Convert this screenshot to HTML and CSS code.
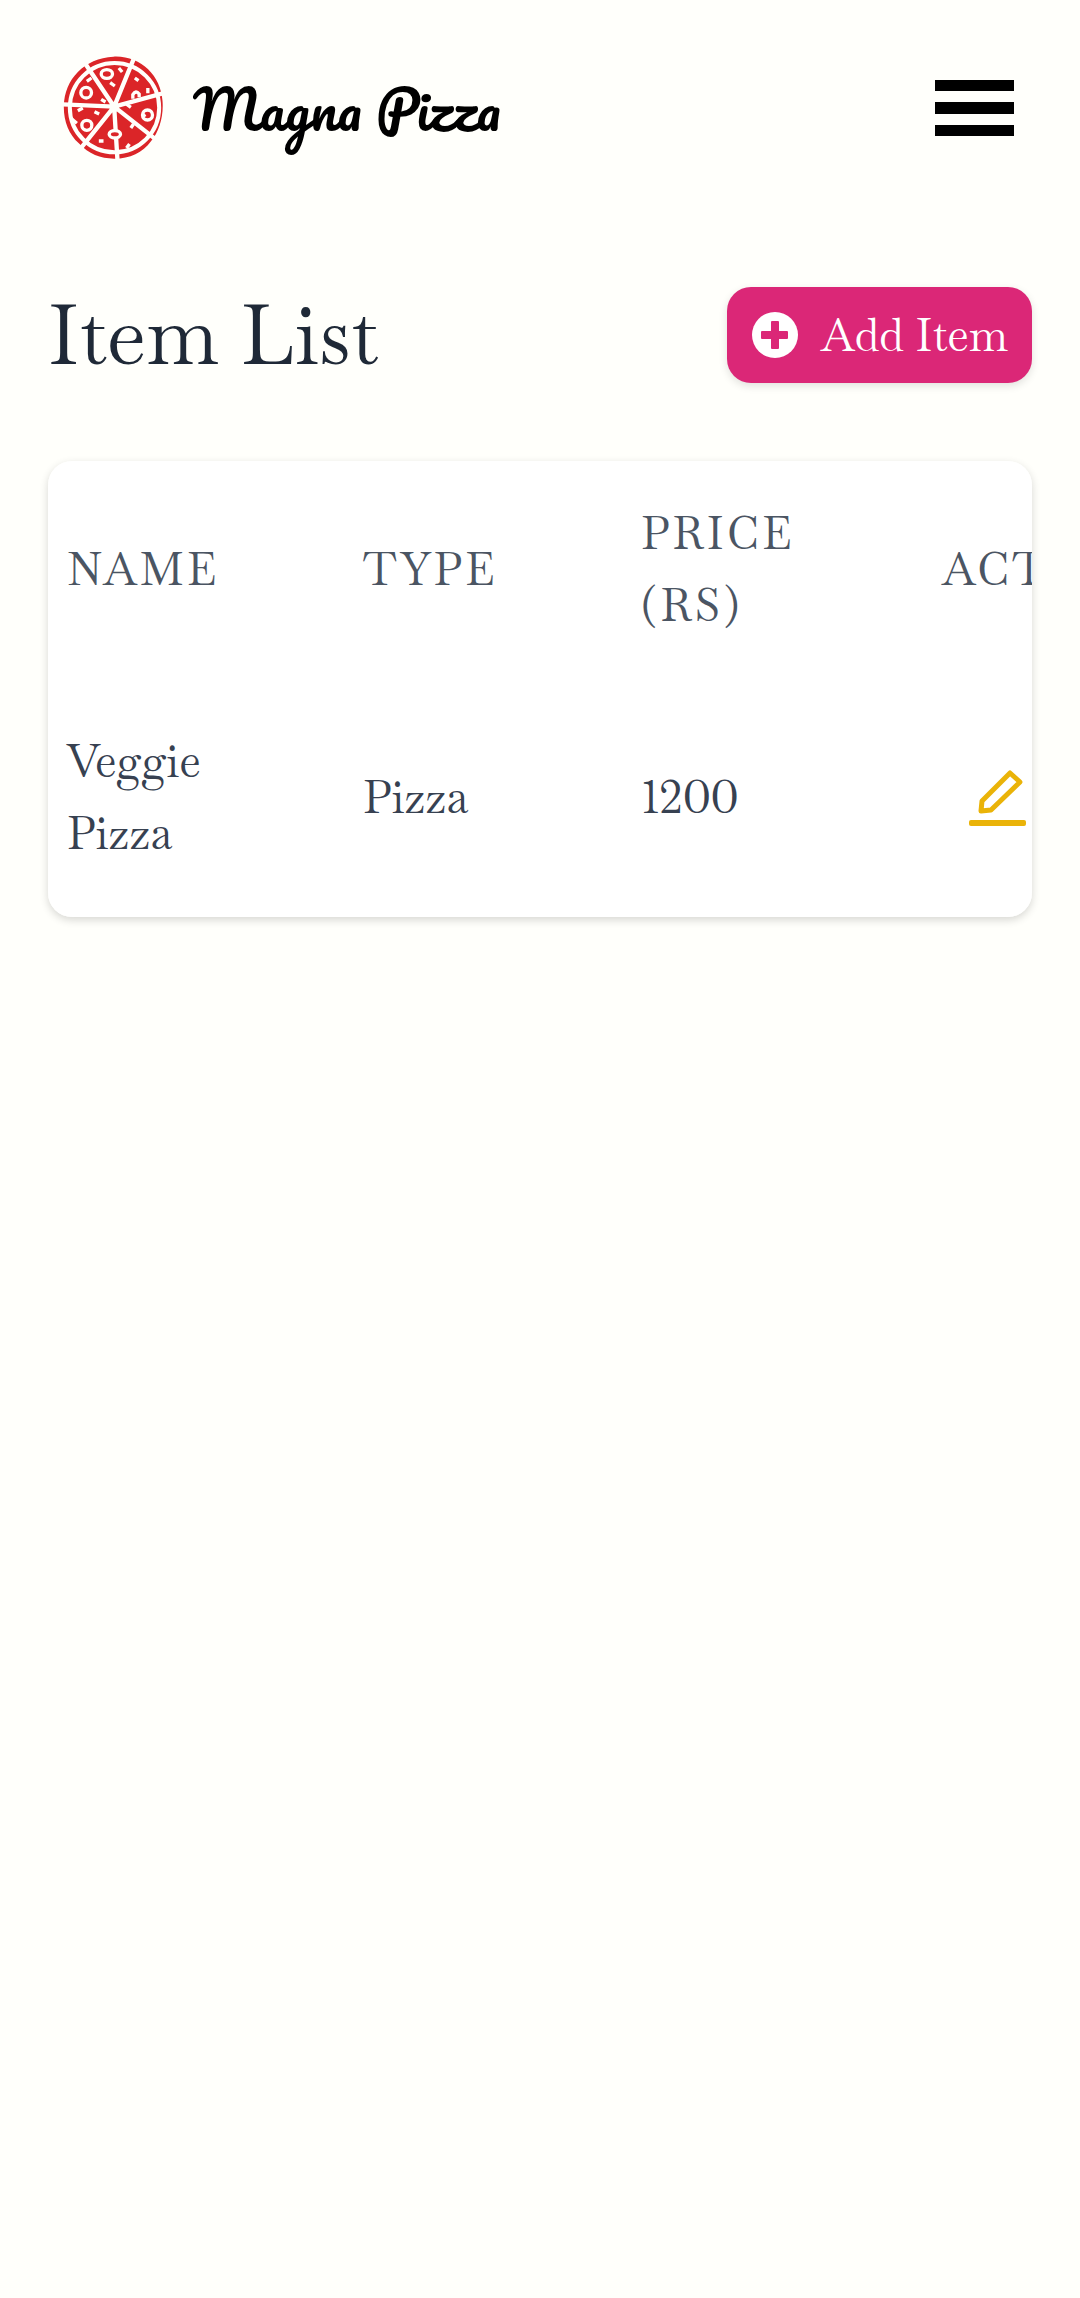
FILE: index.html
```html
<!DOCTYPE html>
<html lang="en">
<head>
  <meta charset="utf-8">
  <meta name="viewport" content="width=device-width, initial-scale=1">
  <title>Magna Pizza</title>
  <link rel="stylesheet" href="styles.css">
</head>
<body>
  <header class="site-header">
    <a class="brand" href="#">
      <svg class="brand-logo" viewBox="40 46 303 309" aria-hidden="true">
        <path fill="#db2528" d="M190 48C270 44 332 104 337 180C341 226 327 272 303 301C277 337 240 354 192 354C150 354 116 340 86 308C56 282 40 240 41 196C43 116 102 52 190 48Z"/>
        <g fill="none" stroke="#fffffb" stroke-width="12">
          <circle cx="193" cy="201" r="134"/>
          <path d="M192 198L250 56M192 198L348 155M192 198L314 294M192 198L202 360M192 198L94 320M192 198L34 191M192 198L106 70" stroke-width="13"/>
        </g>
        <circle cx="192" cy="200" r="14" fill="#fffffb"/>
        <g fill="#db2528" stroke="#fffffb" stroke-width="10">
          <ellipse cx="170" cy="100" rx="17" ry="13"/>
          <circle cx="108" cy="156" r="16"/>
          <circle cx="110" cy="254" r="15"/>
          <ellipse cx="194" cy="281" rx="17" ry="11"/>
          <circle cx="292" cy="223" r="15"/>
        </g>
        <g fill="none" stroke="#fffffb" stroke-width="10">
          <path d="M248 174V162Q257 147 267 160V170M206 82L216 94M180 126L194 136M254 112L265 120M293 142V158M110 122L124 112M153 176L166 184M83 210L98 202M133 213L147 220M64 234L80 248M146 301H160M242 262L250 250M229 322L238 310M228 190L242 200M276 228L286 222"/>
        </g>
      </svg>
      <span class="brand-name">Magna Pizza</span>
    </a>
    <button class="menu-button" type="button" aria-label="Open menu">
      <svg class="menu-icon" viewBox="0 0 79 58" aria-hidden="true">
        <path d="M0 1H79V12H0ZM0 23H79V35H0ZM0 46H79V57H0Z"/>
      </svg>
    </button>
  </header>

  <main class="content">
    <div class="title-row">
      <h1 class="title">Item List</h1>
      <button class="add-button" type="button">
        <svg class="add-icon" viewBox="0 0 48 48" aria-hidden="true">
          <circle cx="24" cy="24" r="23" fill="#fff"/>
          <path fill="#db2777" d="M21 10H27Q28 10 28 11V20H36Q37 20 37 21V27Q37 28 36 28H28V37Q28 38 27 38H21Q20 38 20 37V28H11Q10 28 10 27V21Q10 20 11 20H20V11Q20 10 21 10Z"/>
        </svg>
        Add Item
      </button>
    </div>

    <div class="card">
      <table class="items">
        <colgroup>
          <col class="col-name">
          <col class="col-type">
          <col class="col-price">
          <col class="col-actions">
        </colgroup>
        <thead>
          <tr>
            <th scope="col">Name</th>
            <th scope="col">Type</th>
            <th scope="col">Price (Rs)</th>
            <th scope="col">Actions</th>
          </tr>
        </thead>
        <tbody>
          <tr>
            <td>Veggie Pizza</td>
            <td>Pizza</td>
            <td>1200</td>
            <td>
              <button class="edit-button" type="button" aria-label="Edit Veggie Pizza">
                <svg class="edit-icon" viewBox="0 0 64 64" aria-hidden="true">
                  <path fill="none" stroke="currentColor" stroke-width="5" stroke-linejoin="round" d="M44 8L54 17L25 45L15 46L16 36Z"/>
                  <rect x="3" y="55" width="57" height="6" rx="2" fill="currentColor"/>
                </svg>
              </button>
            </td>
          </tr>
        </tbody>
      </table>
    </div>
  </main>
</body>
</html>
```
FILE: styles.css
```css
* {
  box-sizing: border-box;
}

body {
  margin: 0;
  min-height: 100vh;
  background: #fffffb;
  color: #1f2937;
  font-family: Baskervville, "Liberation Serif", serif;
  font-size: 45px;
  font-variant-numeric: lining-nums;
  line-height: 72px;
}

button {
  border: 0;
  padding: 0;
  background: none;
  font: inherit;
  cursor: pointer;
}

svg {
  display: block;
}

.site-header {
  display: flex;
  align-items: center;
  justify-content: space-between;
  padding: 56px 66px 54px 63px;
}

.brand {
  display: flex;
  align-items: center;
  gap: 28px;
  color: #000;
  text-decoration: none;
}

.brand-logo {
  width: 102px;
  height: 103px;
}

.brand-name {
  font-family: Pacifico, "Liberation Serif", serif;
  font-size: 54px;
}

.menu-icon {
  width: 79px;
  height: 58px;
}

.content {
  padding: 68px 48px;
}

.title-row {
  display: flex;
  align-items: center;
  justify-content: space-between;
  margin-bottom: 72px;
}

.title {
  margin: 0;
  font-size: 83px;
  font-weight: 400;
  line-height: 108px;
}

.add-button {
  display: flex;
  align-items: center;
  gap: 22px;
  padding: 12px 24px;
  border-radius: 24px;
  background: #db2777;
  color: #fff;
  box-shadow: 0 3px 8px rgba(0, 0, 0, 0.12);
}

.add-icon {
  width: 48px;
  height: 48px;
}

.card {
  overflow-x: auto;
  scrollbar-width: none;
  border-radius: 24px;
  background: #fff;
  box-shadow: 0 3px 8px rgba(0, 0, 0, 0.16);
}

.items {
  width: 1180px;
  table-layout: fixed;
  border-collapse: collapse;
}

.col-name {
  width: 296px;
}

.col-type {
  width: 278px;
}

.col-price {
  width: 301px;
}

.items th,
.items td {
  text-align: left;
  vertical-align: middle;
}

.items th {
  padding: 36px 80px 36px 19px;
  color: #4b5563;
  font-weight: 400;
  letter-spacing: 3px;
  text-transform: uppercase;
}

.items td {
  padding: 48px 120px 48px 19px;
  color: #374151;
}

.edit-button {
  display: block;
  padding: 0 24px;
  color: #eab308;
}

.edit-icon {
  width: 64px;
  height: 64px;
}
```
